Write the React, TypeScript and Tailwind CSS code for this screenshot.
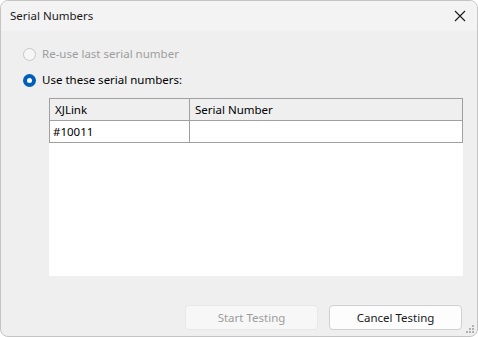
export default function App() {
  const font = { fontFamily: '"Segoe UI", "Noto Sans", sans-serif' };
  return (
    <div className="w-[478px] h-[337px] bg-white" style={font}>
      <div className="relative w-[478px] h-[337px] flex flex-col rounded-[8px] border border-[#c4c4c4] overflow-hidden bg-[#efefef] text-[11.5px] text-black">
        {/* title bar */}
        <div className="h-[30px] shrink-0 flex items-center justify-between bg-[#f3f3f3] pl-[9px] pr-[8px]">
          <span className="text-[11.5px] text-[#1a1a1a]">Serial Numbers</span>
          <svg width="16" height="16" viewBox="0 0 16 16" className="mr-[1px]">
            <path d="M3 3 L13 13 M13 3 L3 13" stroke="#1a1a1a" strokeWidth="1.1" />
          </svg>
        </div>

        <div className="flex-1 flex flex-col pl-[22px] pr-[14px] pt-[16px]">
          <label className="flex items-center gap-[6px] h-[14px] text-[#9d9d9d]">
            <span className="w-[13px] h-[13px] rounded-full border border-[#c6c6c6] bg-[#f6f6f6]" />
            Re-use last serial number
          </label>
          <label className="flex items-center gap-[6px] h-[14px] mt-[12px]">
            <span className="w-[13px] h-[13px] rounded-full bg-[#005fb8] flex items-center justify-center">
              <span className="w-[5px] h-[5px] rounded-full bg-white" />
            </span>
            Use these serial numbers:
          </label>

          <div className="ml-[26px] mt-[11px] w-[414px] h-[178px] bg-white">
            <div className="grid grid-cols-[140px_1fr] border border-[#a0a0a0]">
              <div className="h-[22px] flex items-center px-[5px] bg-[#efefef] border-r border-b border-[#a0a0a0]">XJLink</div>
              <div className="h-[22px] flex items-center px-[5px] bg-[#efefef] border-b border-[#a0a0a0]">Serial Number</div>
              <div className="h-[21px] flex items-center px-[3px] border-r border-[#a0a0a0]">#10011</div>
              <div className="h-[21px]" />
            </div>
          </div>

          <div className="flex justify-end gap-[11px] mt-[29px] pr-[1px]">
            <button className="w-[133px] h-[25px] rounded-[4px] border border-[#e8e8e8] bg-[#f7f7f7] text-[#9d9d9d]">
              Start Testing
            </button>
            <button className="w-[133px] h-[25px] rounded-[4px] border border-[#d0d0d0] bg-[#fdfdfd] text-[#1a1a1a]">
              Cancel Testing
            </button>
          </div>
        </div>

        {/* resize grip */}
        <svg width="8" height="8" viewBox="0 0 8 8" className="absolute right-[3px] bottom-[3px]">
          <rect x="6" y="0" width="2" height="2" fill="#b0b0b0" />
          <rect x="3" y="3" width="2" height="2" fill="#b0b0b0" />
          <rect x="6" y="3" width="2" height="2" fill="#b0b0b0" />
          <rect x="0" y="6" width="2" height="2" fill="#b0b0b0" />
          <rect x="3" y="6" width="2" height="2" fill="#b0b0b0" />
          <rect x="6" y="6" width="2" height="2" fill="#b0b0b0" />
        </svg>
      </div>
    </div>
  );
}
